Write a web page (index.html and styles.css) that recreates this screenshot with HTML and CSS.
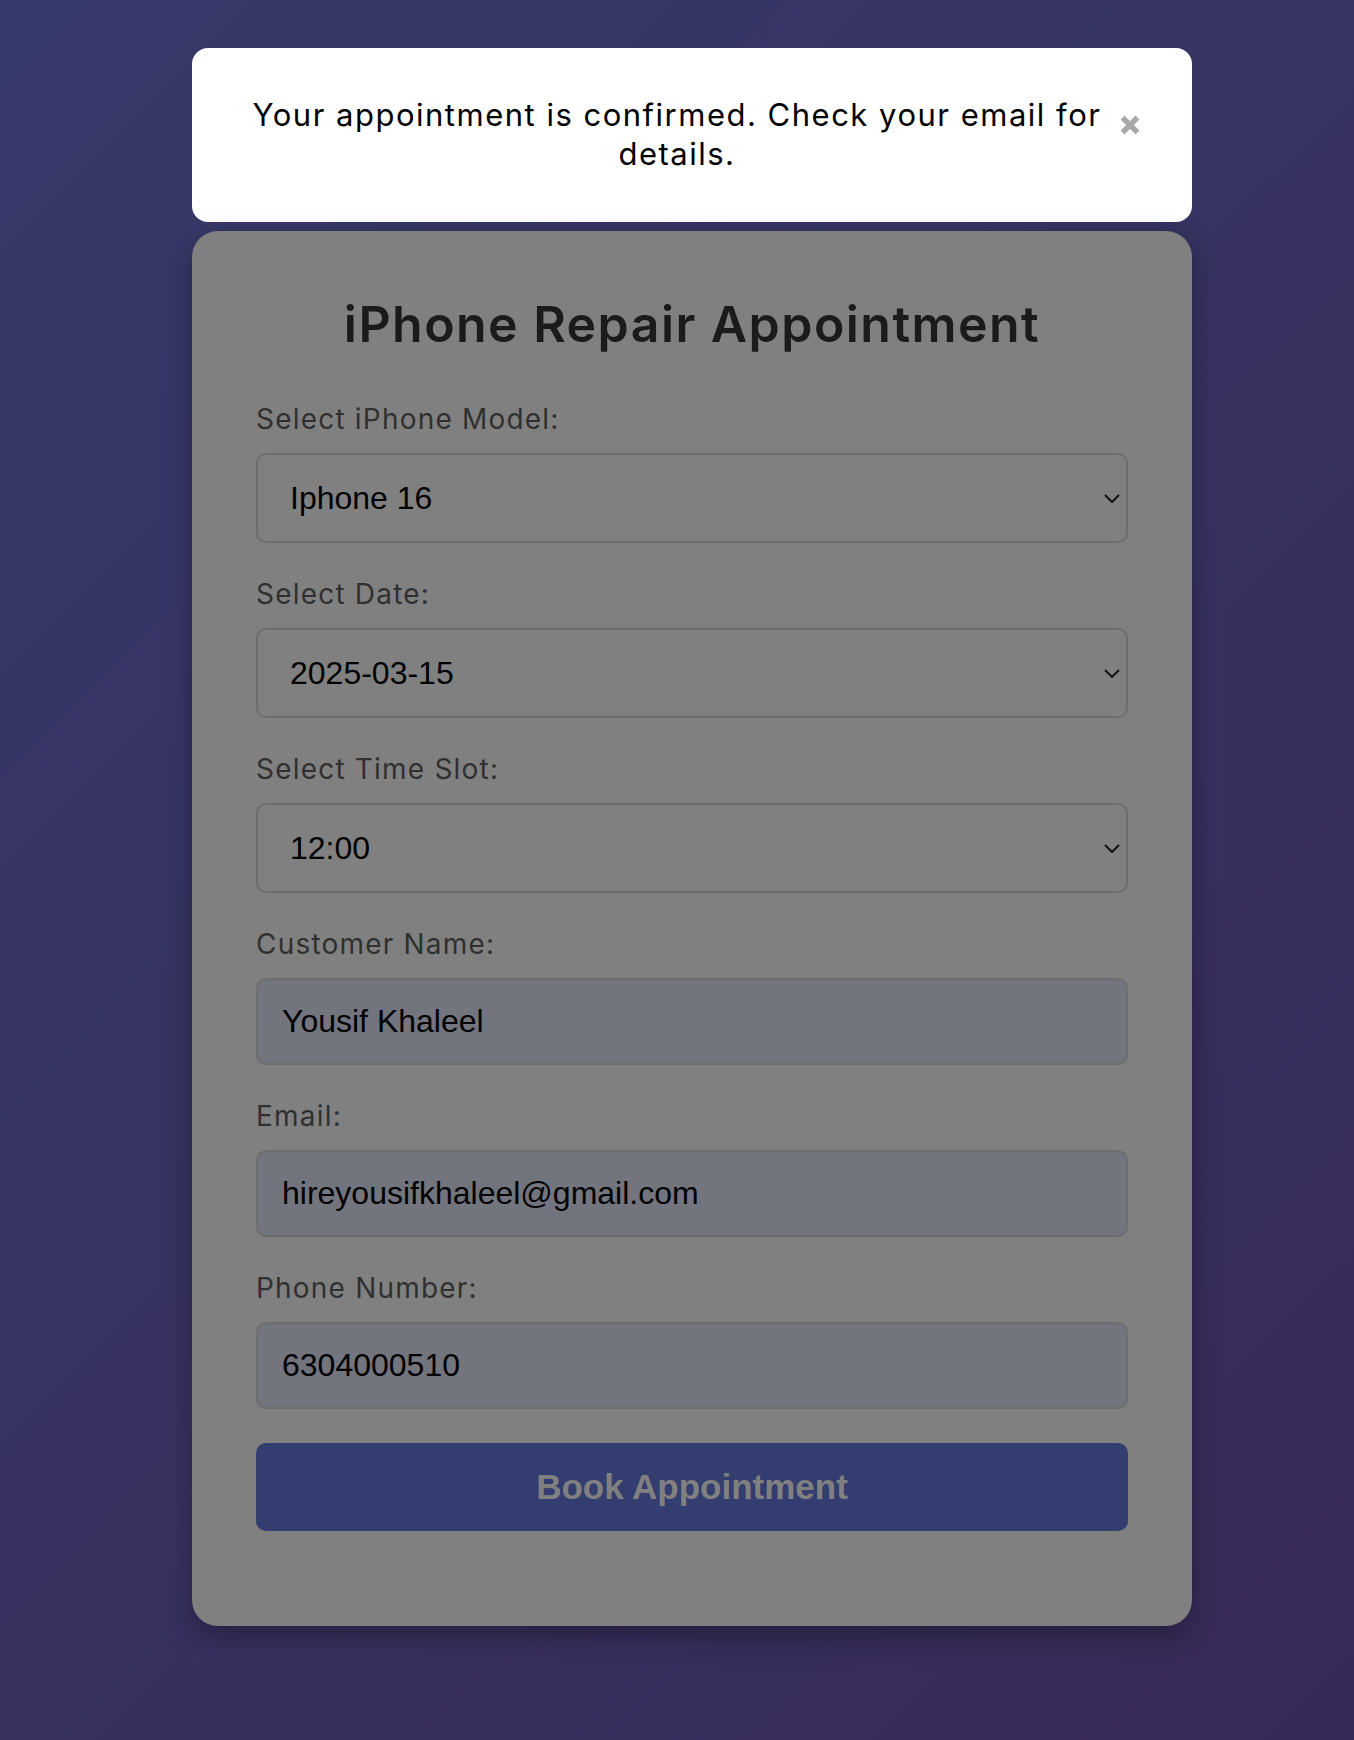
FILE: index.html
```html
<!DOCTYPE html>
<html lang="en">
<head>
<meta charset="utf-8">
<title>iPhone Repair Appointment</title>
<link rel="stylesheet" href="styles.css">
</head>
<body>
<main class="page">
  <div class="toast" role="alert">
    <p class="toast-text">Your appointment is confirmed. Check your email for details.</p>
    <button class="toast-close" type="button" aria-label="Close">
      <svg viewBox="0 0 20 20" width="20" height="20" aria-hidden="true"><path d="M2.5 2.5 L17.5 17.5 M17.5 2.5 L2.5 17.5"/></svg>
    </button>
  </div>

  <section class="card">
    <h1 class="title">iPhone Repair Appointment</h1>
    <form class="form">
      <div class="field">
        <label class="label" for="model">Select iPhone Model:</label>
        <div class="select-wrap">
          <select id="model" class="control select"><option>Iphone 16</option></select>
          <svg class="chevron" viewBox="0 0 16 9" width="16" height="9" aria-hidden="true"><path d="M1 1 L8 8 L15 1"/></svg>
        </div>
      </div>
      <div class="field">
        <label class="label" for="date">Select Date:</label>
        <div class="select-wrap">
          <select id="date" class="control select"><option>2025-03-15</option></select>
          <svg class="chevron" viewBox="0 0 16 9" width="16" height="9" aria-hidden="true"><path d="M1 1 L8 8 L15 1"/></svg>
        </div>
      </div>
      <div class="field">
        <label class="label" for="time">Select Time Slot:</label>
        <div class="select-wrap">
          <select id="time" class="control select"><option>12:00</option></select>
          <svg class="chevron" viewBox="0 0 16 9" width="16" height="9" aria-hidden="true"><path d="M1 1 L8 8 L15 1"/></svg>
        </div>
      </div>
      <div class="field">
        <label class="label" for="name">Customer Name:</label>
        <input id="name" class="control input" type="text" value="Yousif Khaleel">
      </div>
      <div class="field">
        <label class="label" for="email">Email:</label>
        <input id="email" class="control input" type="email" value="hireyousifkhaleel@gmail.com">
      </div>
      <div class="field">
        <label class="label" for="phone">Phone Number:</label>
        <input id="phone" class="control input" type="tel" value="6304000510">
      </div>
      <button class="submit" type="button">Book Appointment</button>
    </form>
  </section>
</main>
</body>
</html>
```

FILE: styles.css
```css
* {
  box-sizing: border-box;
}

html, body {
  margin: 0;
  padding: 0;
}

body {
  min-height: 1740px;
  background: linear-gradient(135deg, #363a6a 0%, #382a58 100%);
  font-family: Inter, "DejaVu Sans", sans-serif;
}

.page {
  display: flex;
  flex-direction: column;
  align-items: center;
  padding: 48px 0 0 30px;
}

.toast {
  width: 1000px;
  background: #ffffff;
  border-radius: 16px;
  padding: 48px 52px 49px 52px;
  display: flex;
  align-items: flex-start;
}

.toast-text {
  flex: 1;
  margin: 0;
  text-align: center;
  font-size: 31px;
  line-height: 38.5px;
  color: #000;
  letter-spacing: 1.5px;
}

.toast-close {
  margin: 19px 0 0 10px;
  padding: 0;
  border: 0;
  background: none;
  width: 20px;
  height: 20px;
  display: flex;
}

.toast-close path {
  stroke: #a9a9a9;
  stroke-width: 5.5;
  fill: none;
}

.card {
  width: 1000px;
  margin-top: 9px;
  background: #808080;
  border-radius: 26px;
  padding: 66px 64px 95px 64px;
  box-shadow: 0 10px 28px rgba(0, 0, 0, 0.32);
}

.title {
  margin: 0 0 51px 0;
  text-align: center;
  font-size: 50px;
  line-height: 54px;
  font-weight: 600;
  color: #1b1b1b;
  letter-spacing: 1.45px;
}

.form {
  display: flex;
  flex-direction: column;
}

.field {
  margin-bottom: 34px;
}

.label {
  display: block;
  margin-bottom: 17px;
  font-size: 28px;
  line-height: 34px;
  color: #303030;
  letter-spacing: 1.2px;
}

.control {
  display: block;
  width: 100%;
  margin: 0;
  border: 2px solid #6e6e6e;
  border-radius: 10px;
  font-family: "Liberation Sans", Arial, sans-serif;
  font-size: 32px;
  color: #000;
  outline: none;
}

.select-wrap {
  position: relative;
}

.select {
  height: 90px;
  padding: 0 48px 0 32px;
  background: #808080;
  appearance: none;
  -webkit-appearance: none;
}

.chevron {
  position: absolute;
  right: 8px;
  top: 41px;
}

.chevron path {
  stroke: #111;
  stroke-width: 2;
  fill: none;
}

.input {
  height: 87px;
  padding: 0 24px;
  background: #72757e;
}

.submit {
  height: 88px;
  width: 100%;
  border: 0;
  border-radius: 10px;
  background: #343d70;
  color: #808080;
  font-family: "Liberation Sans", Arial, sans-serif;
  font-weight: 700;
  font-size: 35px;
}
```
